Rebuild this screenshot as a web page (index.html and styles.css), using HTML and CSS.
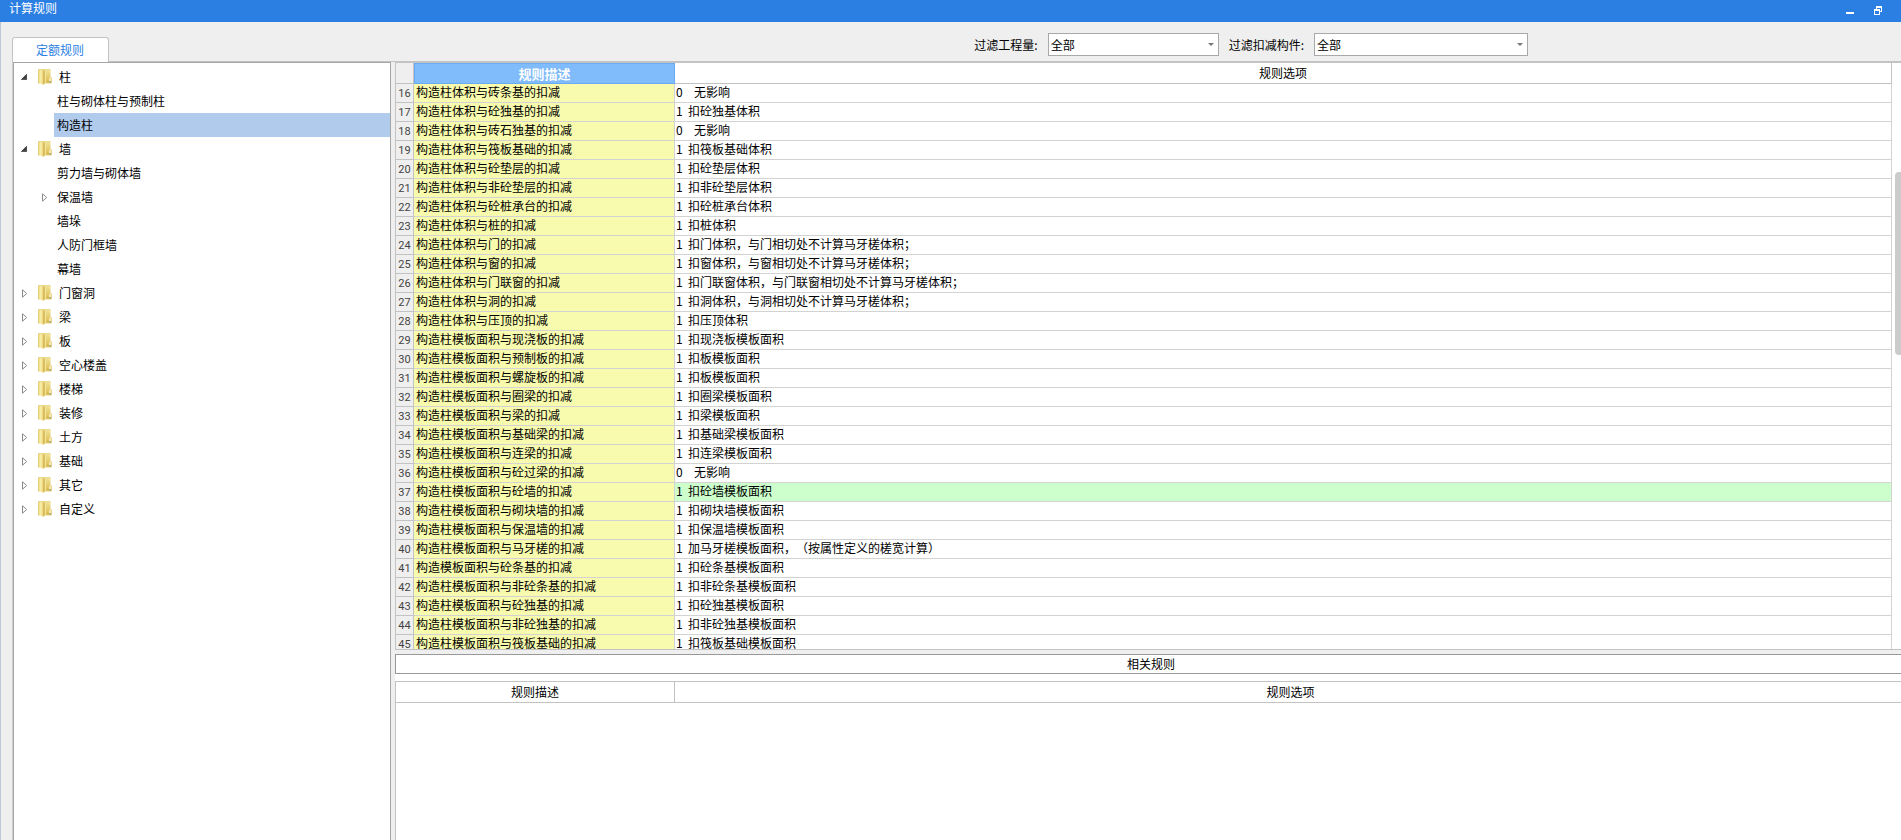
FILE: index.html
```html
<!DOCTYPE html>
<html lang="zh-CN">
<head>
<meta charset="utf-8">
<title>计算规则</title>
<link rel="stylesheet" href="styles.css">
</head>
<body>
<svg class="defs" width="0" height="0" aria-hidden="true">
  <defs>
    <linearGradient id="gBack" x1="0" y1="0" x2="0" y2="1"><stop offset="0" stop-color="#f1e59c"/><stop offset="1" stop-color="#dcb94a"/></linearGradient>
    <linearGradient id="gFront" x1="0" y1="0" x2="1" y2="0"><stop offset="0" stop-color="#ead680"/><stop offset=".5" stop-color="#f8f0ac"/><stop offset="1" stop-color="#e6cf70"/></linearGradient>
  </defs>
  <symbol id="folder" viewBox="0 0 14 16">
    <path d="M.3.4h12.2v7.8h1.2v6H.3z" fill="url(#gBack)"/>
    <path d="M.3.6h3.4L5.4 1.8V15.8L3.6 15.2V14.4H.3z" fill="url(#gFront)"/>
    <path d="M5.4 1.8 6.8 1v13.6L5.4 15.8z" fill="#d0b04c"/>
    <path d="M6.8 1h1.2v13.2H6.8z" fill="#f2e49a"/>
    <path d="M.4 14V.6h12" stroke="#e2cb6c" stroke-width=".7" fill="none"/>
    <path d="M11.4 8.8h1.2v3.4h-1.2z" fill="#fffce6"/><path d="M11.4 12.2h1.2v1.4h-1.2z" fill="#62b0b8"/>
  </symbol>
  <symbol id="open" viewBox="0 0 6 6"><path d="M5.6.3V5.6H.3z" fill="#404040" stroke="#222" stroke-width=".6"/></symbol>
  <symbol id="closed" viewBox="0 0 6 9"><path d="M.5.8 4.7 4.5.5 8.2z" fill="#fff" stroke="#8c8c8c"/></symbol>
</svg>
<div class="app">
  <header class="titlebar">
    <h1 class="title">计算规则</h1>
    <button class="winbtn" type="button" aria-label="最小化"><svg width="8" height="9" viewBox="0 0 8 9"><path d="M0 6h8v2H0z" fill="#fff"/></svg></button>
    <button class="winbtn" type="button" aria-label="还原"><svg width="8" height="9" viewBox="0 0 8 9"><path fill="#fff" fill-rule="evenodd" d="M2 0h6v6H6V3H2zM3 2v1h3v2h1V2zM0 3h6v6H0zM1 5v3h4V5z"/></svg></button>
  </header>
  <div class="window">
    <div class="toolbar">
      <button class="tab" type="button">定额规则</button>
      <div class="filters">
        <label for="f1">过滤工程量:</label>
        <span class="combo combo-a"><select id="f1"><option>全部</option></select></span>
        <label for="f2">过滤扣减构件:</label>
        <span class="combo combo-b"><select id="f2"><option>全部</option></select></span>
      </div>
    </div>
    <div class="content">
      <nav class="tree">
        <ul>
          <li class="node"><svg class="arrow"><use href="#open"/></svg><svg class="folder"><use href="#folder"/></svg><span>柱</span></li>
          <li class="leaf"><span>柱与砌体柱与预制柱</span></li>
          <li class="leaf"><span class="selected">构造柱</span></li>
          <li class="node"><svg class="arrow"><use href="#open"/></svg><svg class="folder"><use href="#folder"/></svg><span>墙</span></li>
          <li class="leaf"><span>剪力墙与砌体墙</span></li>
          <li class="leaf"><svg class="arrow child"><use href="#closed"/></svg><span>保温墙</span></li>
          <li class="leaf"><span>墙垛</span></li>
          <li class="leaf"><span>人防门框墙</span></li>
          <li class="leaf"><span>幕墙</span></li>
          <li class="node"><svg class="arrow shut"><use href="#closed"/></svg><svg class="folder"><use href="#folder"/></svg><span>门窗洞</span></li>
          <li class="node"><svg class="arrow shut"><use href="#closed"/></svg><svg class="folder"><use href="#folder"/></svg><span>梁</span></li>
          <li class="node"><svg class="arrow shut"><use href="#closed"/></svg><svg class="folder"><use href="#folder"/></svg><span>板</span></li>
          <li class="node"><svg class="arrow shut"><use href="#closed"/></svg><svg class="folder"><use href="#folder"/></svg><span>空心楼盖</span></li>
          <li class="node"><svg class="arrow shut"><use href="#closed"/></svg><svg class="folder"><use href="#folder"/></svg><span>楼梯</span></li>
          <li class="node"><svg class="arrow shut"><use href="#closed"/></svg><svg class="folder"><use href="#folder"/></svg><span>装修</span></li>
          <li class="node"><svg class="arrow shut"><use href="#closed"/></svg><svg class="folder"><use href="#folder"/></svg><span>土方</span></li>
          <li class="node"><svg class="arrow shut"><use href="#closed"/></svg><svg class="folder"><use href="#folder"/></svg><span>基础</span></li>
          <li class="node"><svg class="arrow shut"><use href="#closed"/></svg><svg class="folder"><use href="#folder"/></svg><span>其它</span></li>
          <li class="node"><svg class="arrow shut"><use href="#closed"/></svg><svg class="folder"><use href="#folder"/></svg><span>自定义</span></li>
        </ul>
      </nav>
      <main class="main">
        <section class="rules">
          <table class="grid">
            <colgroup><col class="c-num"><col class="c-desc"><col></colgroup>
            <thead><tr><td class="corner"></td><th class="active" scope="col">规则描述</th><th scope="col">规则选项</th></tr></thead>
            <tbody>
              <tr><th scope="row">16</th><td>构造柱体积与砖条基的扣减</td><td><span class="code none">0</span>无影响</td></tr>
              <tr><th scope="row">17</th><td>构造柱体积与砼独基的扣减</td><td><span class="code">1</span>扣砼独基体积</td></tr>
              <tr><th scope="row">18</th><td>构造柱体积与砖石独基的扣减</td><td><span class="code none">0</span>无影响</td></tr>
              <tr><th scope="row">19</th><td>构造柱体积与筏板基础的扣减</td><td><span class="code">1</span>扣筏板基础体积</td></tr>
              <tr><th scope="row">20</th><td>构造柱体积与砼垫层的扣减</td><td><span class="code">1</span>扣砼垫层体积</td></tr>
              <tr><th scope="row">21</th><td>构造柱体积与非砼垫层的扣减</td><td><span class="code">1</span>扣非砼垫层体积</td></tr>
              <tr><th scope="row">22</th><td>构造柱体积与砼桩承台的扣减</td><td><span class="code">1</span>扣砼桩承台体积</td></tr>
              <tr><th scope="row">23</th><td>构造柱体积与桩的扣减</td><td><span class="code">1</span>扣桩体积</td></tr>
              <tr><th scope="row">24</th><td>构造柱体积与门的扣减</td><td><span class="code">1</span>扣门体积，与门相切处不计算马牙槎体积；</td></tr>
              <tr><th scope="row">25</th><td>构造柱体积与窗的扣减</td><td><span class="code">1</span>扣窗体积，与窗相切处不计算马牙槎体积；</td></tr>
              <tr><th scope="row">26</th><td>构造柱体积与门联窗的扣减</td><td><span class="code">1</span>扣门联窗体积，与门联窗相切处不计算马牙槎体积；</td></tr>
              <tr><th scope="row">27</th><td>构造柱体积与洞的扣减</td><td><span class="code">1</span>扣洞体积，与洞相切处不计算马牙槎体积；</td></tr>
              <tr><th scope="row">28</th><td>构造柱体积与压顶的扣减</td><td><span class="code">1</span>扣压顶体积</td></tr>
              <tr><th scope="row">29</th><td>构造柱模板面积与现浇板的扣减</td><td><span class="code">1</span>扣现浇板模板面积</td></tr>
              <tr><th scope="row">30</th><td>构造柱模板面积与预制板的扣减</td><td><span class="code">1</span>扣板模板面积</td></tr>
              <tr><th scope="row">31</th><td>构造柱模板面积与螺旋板的扣减</td><td><span class="code">1</span>扣板模板面积</td></tr>
              <tr><th scope="row">32</th><td>构造柱模板面积与圈梁的扣减</td><td><span class="code">1</span>扣圈梁模板面积</td></tr>
              <tr><th scope="row">33</th><td>构造柱模板面积与梁的扣减</td><td><span class="code">1</span>扣梁模板面积</td></tr>
              <tr><th scope="row">34</th><td>构造柱模板面积与基础梁的扣减</td><td><span class="code">1</span>扣基础梁模板面积</td></tr>
              <tr><th scope="row">35</th><td>构造柱模板面积与连梁的扣减</td><td><span class="code">1</span>扣连梁模板面积</td></tr>
              <tr><th scope="row">36</th><td>构造柱模板面积与砼过梁的扣减</td><td><span class="code none">0</span>无影响</td></tr>
              <tr class="current"><th scope="row">37</th><td>构造柱模板面积与砼墙的扣减</td><td><span class="code">1</span>扣砼墙模板面积</td></tr>
              <tr><th scope="row">38</th><td>构造柱模板面积与砌块墙的扣减</td><td><span class="code">1</span>扣砌块墙模板面积</td></tr>
              <tr><th scope="row">39</th><td>构造柱模板面积与保温墙的扣减</td><td><span class="code">1</span>扣保温墙模板面积</td></tr>
              <tr><th scope="row">40</th><td>构造柱模板面积与马牙槎的扣减</td><td><span class="code">1</span>加马牙槎模板面积，（按属性定义的槎宽计算）</td></tr>
              <tr><th scope="row">41</th><td>构造模板面积与砼条基的扣减</td><td><span class="code">1</span>扣砼条基模板面积</td></tr>
              <tr><th scope="row">42</th><td>构造柱模板面积与非砼条基的扣减</td><td><span class="code">1</span>扣非砼条基模板面积</td></tr>
              <tr><th scope="row">43</th><td>构造柱模板面积与砼独基的扣减</td><td><span class="code">1</span>扣砼独基模板面积</td></tr>
              <tr><th scope="row">44</th><td>构造柱模板面积与非砼独基的扣减</td><td><span class="code">1</span>扣非砼独基模板面积</td></tr>
              <tr><th scope="row">45</th><td>构造柱模板面积与筏板基础的扣减</td><td><span class="code">1</span>扣筏板基础模板面积</td></tr>
            </tbody>
          </table>
          <div class="scrollbar"><div class="thumb"></div></div>
        </section>
        <section class="related">
          <h2 class="related-title">相关规则</h2>
          <div class="related-body">
            <table class="grid">
              <colgroup><col class="c-related"><col></colgroup>
              <thead><tr><th scope="col">规则描述</th><th scope="col">规则选项</th></tr></thead>
            </table>
          </div>
        </section>
      </main>
    </div>
  </div>
</div>
</body>
</html>
```
FILE: styles.css
```css
* { box-sizing: border-box; }

body {
  margin: 0;
  background: #efefef;
  color: #000;
  font: 12px/18px "Noto Sans CJK SC", sans-serif;
  text-spacing-trim: space-all;
}

h1, h2, ul { margin: 0; padding: 0; font-size: 12px; font-weight: 400; list-style: none; }
button, select { font: inherit; }
.defs { position: absolute; }

.app { display: flex; flex-direction: column; height: 100vh; overflow: hidden; }

.titlebar {
  display: flex;
  align-items: flex-start;
  gap: 20px;
  height: 22px;
  padding-right: 19px;
  background: #2b7fe3;
  color: #fff;
}
.title { flex: 1; padding-left: 9px; line-height: 16px; }
.winbtn { display: block; width: 8px; height: 16px; padding: 0; border: 0; background: none; }
.winbtn svg { display: block; margin-top: 4px; }

.window {
  display: flex;
  flex: 1;
  flex-direction: column;
  min-height: 0;
  padding-left: 11px;
  border-left: 1px solid #c0c8d8;
}

.toolbar { display: flex; align-items: flex-end; justify-content: space-between; height: 40px; border-bottom: 1px solid #c3c3c3; }
.tab {
  width: 97px;
  height: 25px;
  margin-bottom: -1px;
  padding: 0 1px 0 0;
  border: 1px solid #c3c3c3;
  border-bottom: 0;
  border-radius: 3px 3px 0 0;
  background: #fff;
  color: #2b7fe3;
}
.filters { display: flex; align-items: center; gap: 10px; height: 23px; margin: 0 373px 5px 0; }
.combo { position: relative; height: 23px; }
.combo::after {
  position: absolute;
  top: 10px;
  right: 5px;
  border: 3px solid transparent;
  border-top-color: #777;
  border-bottom: 0;
  content: "";
}
.combo select { width: 100%; height: 23px; padding: 0 2px; border: 1px solid #a9a9a9; border-radius: 0; background: #fff; color: #000; appearance: none; }
.combo-a { width: 171px; }
.combo-b { width: 214px; }

.content { display: flex; flex: 1; gap: 4px; min-height: 0; border-left: 1px solid #d0d0d0; }

.tree { flex: none; width: 378px; padding-top: 2px; border: 1px solid #a5a5a5; border-bottom: 0; background: #fff; line-height: 24px; }
.tree li { display: flex; align-items: center; height: 24px; }
.node { padding-left: 7px; }
.node span { padding-left: 7px; }
.arrow { width: 6px; height: 6px; margin-right: 11px; }
.arrow.shut, .arrow.child { height: 9px; }
.arrow.shut { margin: 0 10px 0 1px; }
.arrow.child { margin: 0 0 0 -12px; }
.folder { width: 14px; height: 16px; }
.leaf { padding-left: 40px; }
.leaf span { flex: 1; padding-left: 3px; }
.arrow.child + span { padding-left: 9px; }
.leaf .selected { background: #b1cbed; }

.main { display: flex; flex: 1; flex-direction: column; min-width: 0; gap: 4px; }

.rules { display: flex; flex: 588 0 0; min-height: 0; overflow: hidden; border: 1px solid #c3c3c3; border-right: 0; background: #fff; }
.grid { flex: 1; width: 100%; height: max-content; border-collapse: separate; border-spacing: 0; table-layout: fixed; }
.c-num { width: 18px; }
.c-desc { width: 261px; }
.c-related { width: 279px; }
.grid th, .grid td { height: 19px; padding: 0; border: solid #d3d3d3; border-width: 0 1px 1px 0; font-weight: 400; line-height: 18px; white-space: nowrap; }
.grid thead th, .grid thead td { height: 21px; border-color: #c3c3c3; line-height: 20px; text-align: center; }
.grid .corner { background: #efefef; }
.grid thead .active { border: 1px solid #6aaaf0; background: #80bbfb; color: #fff; font-size: 13px; font-weight: 700; line-height: 19px; }
.grid tbody th { padding-top: 2px; border-color: #c3c3c3; background: #efefef; color: #444; font-family: Roboto, sans-serif; font-size: 11px; line-height: 16px; }
.grid tbody td { padding: 0 0 2px 2px; line-height: 16px; }
.grid tbody td:last-child { padding-left: 1px; }
.grid tbody th + td { background: #f8fbae; }
.grid .current td:last-child { background: #ccffcc; }
.code { display: inline-block; width: 12px; }
.code.none { width: 18px; }

.scrollbar { width: 9px; padding: 109px 0 0 3px; }
.thumb { height: 183px; border-radius: 4px 0 0 4px; background: #cbcbcb; }

.related { display: flex; flex: 186 0 0; flex-direction: column; min-height: 0; margin-right: -6px; background: #fff; }
.related-title { height: 20px; margin-bottom: 7px; border: 1px solid #999; text-align: center; }
.related-body { flex: 1; border: solid #c3c3c3; border-width: 1px 0 0 1px; }
```
